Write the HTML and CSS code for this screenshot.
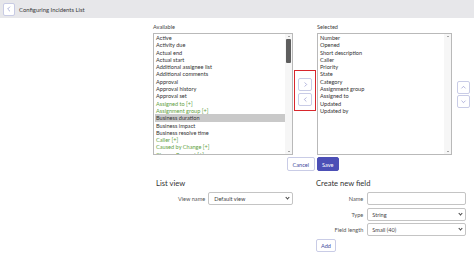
FILE: index.html
```html
<!DOCTYPE html>
<html>
<head>
<meta charset="utf-8"/>
<title>Configuring Incidents List</title>
<link rel="stylesheet" href="styles.css">
</head>
<body>

<header class="topbar">
  <button class="back" title="Back">
    <svg viewBox="0 0 12 12" width="8" height="8"><polyline points="7.5,2.5 4,6 7.5,9.5" fill="none" stroke="#8a8fc8" stroke-width="1"/></svg>
  </button>
  <span class="title">Configuring Incidents List</span>
</header>

<main class="editor">
  <div class="slush">
    <div class="column available">
      <div class="col-label">Available</div>
      <div class="listbox">
        <ul class="options">
          <li>Active</li>
          <li>Activity due</li>
          <li>Actual end</li>
          <li>Actual start</li>
          <li>Additional assignee list</li>
          <li>Additional comments</li>
          <li>Approval</li>
          <li>Approval history</li>
          <li>Approval set</li>
          <li class="ref">Assigned to [+]</li>
          <li class="ref">Assignment group [+]</li>
          <li class="picked">Business duration</li>
          <li>Business impact</li>
          <li>Business resolve time</li>
          <li class="ref">Caller [+]</li>
          <li class="ref">Caused by Change [+]</li>
          <li class="ref">Change Request [+]</li>
        </ul>
        <div class="scrollbar">
          <span class="arrow up"></span>
          <span class="thumb"></span>
          <span class="arrow down"></span>
        </div>
      </div>
    </div>

    <div class="mover">
      <div class="mover-box">
        <button class="icon-btn">
          <svg viewBox="0 0 12 12" width="7" height="7"><polyline points="4.5,2.5 8,6 4.5,9.5" fill="none" stroke="#7d82c4" stroke-width="1"/></svg>
        </button>
        <button class="icon-btn">
          <svg viewBox="0 0 12 12" width="7" height="7"><polyline points="7.5,2.5 4,6 7.5,9.5" fill="none" stroke="#7d82c4" stroke-width="1"/></svg>
        </button>
      </div>
    </div>

    <div class="column selected">
      <div class="col-label">Selected</div>
      <div class="listbox">
        <ul class="options">
          <li>Number</li>
          <li>Opened</li>
          <li>Short description</li>
          <li>Caller</li>
          <li>Priority</li>
          <li>State</li>
          <li>Category</li>
          <li>Assignment group</li>
          <li>Assigned to</li>
          <li>Updated</li>
          <li>Updated by</li>
        </ul>
        <div class="scrollbar">
          <span class="arrow up"></span>
          <span class="track"></span>
          <span class="arrow down"></span>
        </div>
      </div>
    </div>

    <div class="order">
      <button class="icon-btn">
        <svg viewBox="0 0 12 12" width="7" height="7"><polyline points="2.5,7.5 6,4 9.5,7.5" fill="none" stroke="#7d82c4" stroke-width="1"/></svg>
      </button>
      <button class="icon-btn">
        <svg viewBox="0 0 12 12" width="7" height="7"><polyline points="2.5,4.5 6,8 9.5,4.5" fill="none" stroke="#7d82c4" stroke-width="1"/></svg>
      </button>
    </div>
  </div>

  <div class="actions">
    <button class="btn">Cancel</button>
    <button class="btn primary">Save</button>
  </div>

  <div class="bottom">
    <section class="list-view">
      <h2>List view</h2>
      <div class="form-row">
        <label>View name</label>
        <div class="select">Default view<span class="chev"></span></div>
      </div>
    </section>

    <section class="new-field">
      <h2>Create new field</h2>
      <div class="form-row">
        <label>Name</label>
        <div class="input"></div>
      </div>
      <div class="form-row">
        <label>Type</label>
        <div class="select">String<span class="chev"></span></div>
      </div>
      <div class="form-row">
        <label>Field length</label>
        <div class="select">Small (40)<span class="chev"></span></div>
      </div>
      <button class="btn add">Add</button>
    </section>
  </div>
</main>

</body>
</html>
```

FILE: styles.css
```css
body {
   margin: 0;
   background-color: white;
   font-family: Lato, "Liberation Sans", sans-serif;
   font-size: 5.6px;
   color: #333;
}

button {
   font-family: inherit;
   cursor: pointer;
}

/* header */

.topbar {
   height: 18px;
   background-color: #e7e7ea;
   display: flex;
   align-items: center;
   padding-left: 3px;
}

.back {
   width: 12px;
   height: 13px;
   padding: 0;
   background: white;
   border: 1px solid #c8cbe4;
   border-radius: 2px;
   display: flex;
   align-items: center;
   justify-content: center;
}

.title {
   margin-left: 4px;
   font-size: 5.9px;
   color: #3a3a3a;
}

/* slushbucket */

.slush {
   display: flex;
   margin-top: 5px;
   margin-left: 153px;
}

.col-label {
   height: 8px;
   line-height: 8px;
   margin-bottom: 2px;
   color: #444;
}

.available { width: 140px; }
.selected { width: 135px; }

.listbox {
   height: 120px;
   border: 1px solid #b9b9b9;
   display: flex;
   overflow: hidden;
   background: white;
}

.options {
   list-style: none;
   margin: 0;
   padding: 0 0 0 1px;
   flex: 1;
}

.options li {
   height: 7.3px;
   line-height: 7.3px;
   padding-left: 1px;
   white-space: nowrap;
   color: #333;
}

.options li.ref {
   color: #5f9f3f;
}

.options li.picked {
   background-color: #c9c9c9;
}

.scrollbar {
   width: 7px;
   display: flex;
   flex-direction: column;
   align-items: center;
   background: #f6f6f6;
}

.arrow {
   width: 0;
   height: 0;
   border-left: 1.5px solid transparent;
   border-right: 1.5px solid transparent;
   margin: 2px 0;
}

.arrow.up { border-bottom: 1.5px solid #555; }
.arrow.down { border-top: 1.5px solid #555; }

.thumb {
   width: 5px;
   height: 24px;
   background: #5e5e5e;
   border-radius: 1px;
}

.track, .thumb + .arrow { margin-top: auto; }
.track { flex: 1; }

.mover {
   width: 24px;
   display: flex;
   align-items: flex-start;
   justify-content: center;
   padding-top: 47px;
}

.mover-box {
   border: 1.5px solid #d8262c;
   padding: 7px 3px 4px;
   display: flex;
   flex-direction: column;
   gap: 2px;
}

.icon-btn {
   width: 14px;
   height: 13px;
   padding: 0;
   background: white;
   border: 1px solid #c9cce6;
   border-radius: 2px;
   display: flex;
   align-items: center;
   justify-content: center;
}

.order {
   width: 22px;
   display: flex;
   flex-direction: column;
   align-items: center;
   gap: 1px;
   padding-top: 58px;
}

.order .icon-btn {
   width: 13px;
}

/* buttons */

.actions {
   display: flex;
   gap: 2px;
   margin: 2px 0 0 287px;
}

.btn {
   height: 14px;
   padding: 0 4.5px;
   font-size: 5.6px;
   background: white;
   color: #454b9c;
   border: 1px solid #c9cce6;
   border-radius: 2px;
}

.btn.primary {
   background: #4c4fb6;
   border-color: #4c4fb6;
   color: white;
}

/* list view / new field */

.bottom {
   display: flex;
   margin-top: 8px;
}

.bottom h2 {
   margin: 0 0 4px;
   height: 9px;
   line-height: 9px;
   font-size: 7.6px;
   font-weight: normal;
   color: #333;
}

.list-view {
   margin-left: 156px;
   width: 137px;
}

.new-field {
   margin-left: 23px;
   width: 150px;
}

.form-row {
   display: flex;
   align-items: center;
   gap: 3px;
   margin-bottom: 2.5px;
}

.form-row label {
   width: 50px;
   text-align: right;
   color: #555;
}

.new-field .form-row { gap: 4px; }
.new-field .form-row label { width: 48px; }

.select, .input {
   position: relative;
   height: 11px;
   line-height: 11px;
   border: 1px solid #c4c4c4;
   border-radius: 2px;
   background: white;
   padding-left: 4px;
   color: #444;
}

.list-view .select {
   width: 79px;
   padding-left: 5px;
}

.new-field .select, .new-field .input {
   width: 94px;
}

.chev {
   position: absolute;
   right: 3px;
   top: 3px;
   width: 2px;
   height: 2px;
   border-right: 1px solid #444;
   border-bottom: 1px solid #444;
   transform: rotate(45deg);
}

.btn.add {
   height: 13px;
   padding: 0 4px;
   margin-top: 0.5px;
}
```
